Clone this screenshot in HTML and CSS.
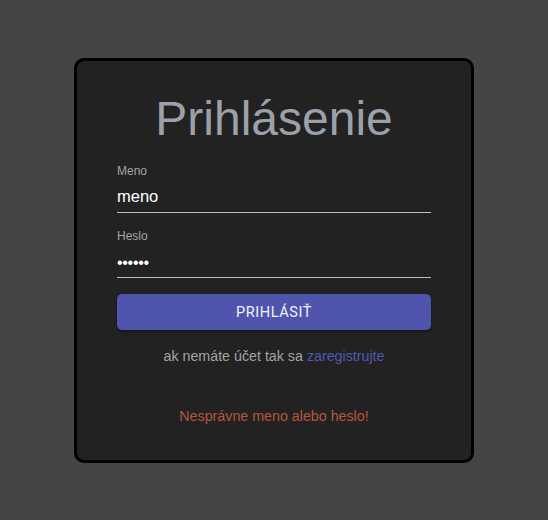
FILE: index.html
```html
<!DOCTYPE html>
<html lang="sk">
<head>
<meta charset="utf-8">
<title>Prihlásenie</title>
<link rel="stylesheet" href="styles.css">
</head>
<body>
<main class="page">
  <section class="card">
    <h1 class="title">Prihlásenie</h1>
    <form class="form">
      <label class="field">
        <span class="field-label">Meno</span>
        <span class="field-input">meno</span>
      </label>
      <label class="field">
        <span class="field-label">Heslo</span>
        <span class="field-input field-input--password">••••••</span>
      </label>
      <button type="button" class="btn">PRIHLÁSIŤ</button>
    </form>
    <p class="register">ak nemáte účet tak sa <a class="register-link" href="#">zaregistrujte</a></p>
    <p class="error">Nesprávne meno alebo heslo!</p>
  </section>
</main>
</body>
</html>
```

FILE: styles.css
```css
html, body {
  margin: 0;
  padding: 0;
}
body {
  background: #454545;
  font-family: "Liberation Sans", Arial, sans-serif;
  width: 548px;
  height: 520px;
}
.page {
  display: flex;
  justify-content: center;
  padding-top: 58px;
}
.card {
  box-sizing: border-box;
  width: 400px;
  height: 405px;
  background: #222222;
  border: 3px solid #000;
  border-radius: 10px;
  padding: 30px 40px 0;
  display: flex;
  flex-direction: column;
}
.title {
  margin: 0;
  font-weight: 400;
  font-size: 48px;
  line-height: 56px;
  color: #9ba1a9;
  text-align: center;
}
.form {
  margin-top: 17px;
  display: flex;
  flex-direction: column;
}
.field {
  display: flex;
  flex-direction: column;
  border-bottom: 1px solid #bdbdbd;
  margin-bottom: 16px;
}
.field-label {
  font-size: 12px;
  line-height: 14px;
  color: #a6a6a6;
}
.field-input {
  font-size: 16.5px;
  line-height: 19px;
  color: #ffffff;
  padding: 9px 0 6px;
}
.field-input--password {
  font-size: 16px;
  letter-spacing: -0.3px;
  padding: 10px 0 5px;
}
.btn {
  margin-top: 0;
  height: 36px;
  border: none;
  border-radius: 5px;
  background: #4f55ad;
  color: #f2f2f8;
  font-family: Roboto, "Liberation Sans", sans-serif;
  font-size: 14.5px;
  letter-spacing: 0.6px;
  box-shadow: 0 2px 3px rgba(0,0,0,0.35);
}
.register {
  margin: 18px 0 0;
  text-align: center;
  font-size: 14.25px;
  line-height: 16px;
  color: #a3a3a3;
}
.register-link {
  color: #5257b3;
  text-decoration: none;
}
.error {
  margin: 44px 0 0;
  text-align: center;
  font-size: 14.25px;
  line-height: 16px;
  color: #b8543e;
}
```
